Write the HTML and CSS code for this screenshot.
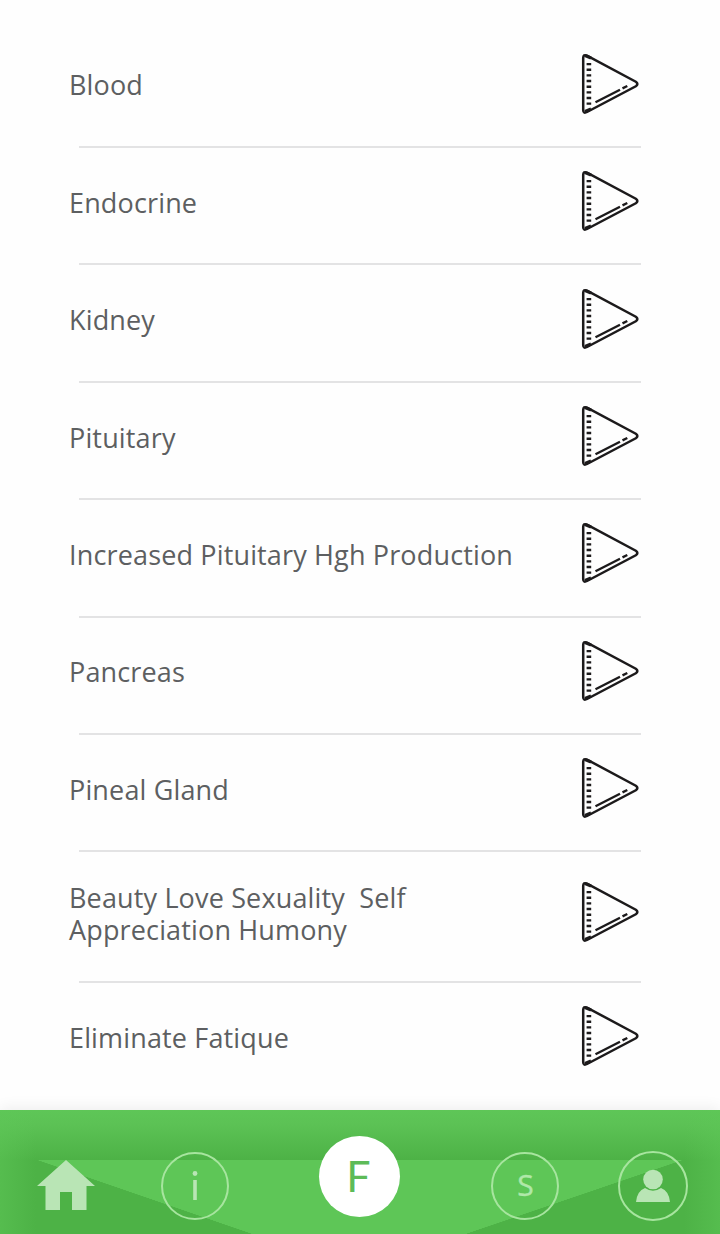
FILE: index.html
```
<!DOCTYPE html>
<html lang="en">
	<head>
		<meta charset="UTF-8">
		<title>Programs</title>
		<link rel="stylesheet" href="styles.css">
	</head>
	<body>
		<svg class="defs" width="0" height="0">
			<symbol id="play" viewBox="0 0 58 62">
				<path d="M2.2 5Q2.2 1 6 2.6L54.8 28.7Q58 31 54.8 33.3L6 59Q2.2 61 2.2 57Z" fill="none" stroke="#1c1a1b" stroke-width="2.5"/>
				<path d="M4 2.5L10 5M4 58.5L10 56" stroke="#1c1a1b" stroke-width="3"/>
				<path d="M7.9 9.9V53" stroke="#1c1a1b" stroke-width="4.6" stroke-dasharray="2.4 3.25"/>
				<path d="M14.5 49.3L39 36.8M41.500 35.4L46.3 33" stroke="#1c1a1b" stroke-width="2.4"/>
			</symbol>
		</svg>
		<ul class="list">
			<li class="row"><span class="name">Blood</span><svg class="play"><use href="#play"/></svg></li>
			<li class="row"><span class="name">Endocrine</span><svg class="play"><use href="#play"/></svg></li>
			<li class="row"><span class="name">Kidney</span><svg class="play"><use href="#play"/></svg></li>
			<li class="row"><span class="name">Pituitary</span><svg class="play"><use href="#play"/></svg></li>
			<li class="row"><span class="name">Increased Pituitary Hgh Production</span><svg class="play"><use href="#play"/></svg></li>
			<li class="row"><span class="name">Pancreas</span><svg class="play"><use href="#play"/></svg></li>
			<li class="row"><span class="name">Pineal Gland</span><svg class="play"><use href="#play"/></svg></li>
			<li class="row tall"><span class="name">Beauty Love Sexuality&nbsp; Self<br>Appreciation Humony</span><svg class="play"><use href="#play"/></svg></li>
			<li class="row"><span class="name">Eliminate Fatique</span><svg class="play"><use href="#play"/></svg></li>
		</ul>
		<nav class="tabs">
			<svg class="home" viewBox="0 0 58 50"><path d="M29 0L58 26H49.500V50H35V32H23V50H8.500V26H0Z"/></svg>
			<span class="tab info"><svg width="6" height="30" viewBox="0 0 6 30"><circle cx="3" cy="2.500" r="2.400"/><path d="M1.200 9h3.600v20H1.200z"/></svg></span>
			<span class="tab active">F</span>
			<span class="tab scan">S</span>
			<span class="tab user"><svg width="34" height="34" viewBox="0 0 34 34"><circle cx="17" cy="10.500" r="9.800"/><path d="M0 33Q1 22 9 19Q17 24.500 25 19Q33 22 34 33Z"/></svg></span>
		</nav>
	</body>
</html>
```
FILE: styles.css
```
*{
	box-sizing: border-box;
}
body{
	margin: 0;
	width: 720px;
	height: 1234px;
	overflow: hidden;
	display: flex;
	flex-direction: column;
	background: #fefefe;
	font-family: "Open Sans", sans-serif;
}
.defs{
	position: absolute;
}
.list{
	flex: 1;
	margin: 0;
	padding: 30.600px 79px 0;
	list-style: none;
}
.row{
	display: flex;
	align-items: center;
	justify-content: space-between;
	height: 117.400px;
	padding-bottom: 8.800px;
	border-bottom: 2px solid #e3e3e4;
}
.row:last-child{
	border-bottom: none;
	padding-bottom: 10.800px;
}
.tall{
	height: 130.400px;
}
.name{
	margin: 3px 0 0 -10px;
	color: #5d5f61;
	font-size: 27px;
	line-height: 32px;
	letter-spacing: .15px;
	white-space: nowrap;
}
.play{
	flex: none;
	width: 58px;
	height: 62px;
	margin-right: 2px;
}
.tabs{
	display: grid;
	grid-template-columns: 123px 70px 81px 70px 70px;
	justify-content: start;
	column-gap: 0;
	height: 124px;
	box-shadow: 0 -2px 14px rgba(0,0,0,.07);
	/* side glow, then the dark band over the light funnel */
	background:
		linear-gradient(90deg, rgba(94,199,87,.5), transparent 36px, transparent 684px, rgba(94,199,87,.5)),
		linear-gradient(#5ec657, #5cc255 14px, #4db246 50px, transparent 50px),
		linear-gradient(to bottom left, transparent 50%, #4db246 50.300%) 38px 50px / 215px 74px no-repeat,
		linear-gradient(to bottom right, transparent 50%, #4db246 50.300%) 465px 50px / 217px 74px no-repeat,
		linear-gradient(#4db246, #4db246) 0 50px / 38px 74px no-repeat,
		linear-gradient(#4db246, #4db246) 682px 50px / 38px 74px no-repeat,
		#5ec657;
}
.home{
	width: 58px;
	height: 50px;
	margin: 50px 0 0 37px;
}
.tabs svg{
	fill: #b9e5b5;
}
.tab{
	display: flex;
	align-items: center;
	justify-content: center;
	width: 68px;
	height: 68px;
	margin-top: 42px;
	border: 2px solid #a7e59f;
	border-radius: 50%;
	color: #b0e8a9;
	font-size: 30px;
}
.info{
	margin-left: 38px;
}
.active{
	width: 81px;
	height: 81px;
	margin: 26px 0 0 126px;
	padding: 0 2px 2px 0;
	border: none;
	background: #fff;
	color: #5dbb58;
	font-family: Lato, sans-serif;
	font-size: 43px;
}
.scan{
	margin-left: 217px;
	padding: 0 0 4px 1px;
	-webkit-text-stroke: .4px #b0e8a9;
}
.user{
	width: 70px;
	height: 70px;
	margin: 41px 0 0 274px;
}
```
